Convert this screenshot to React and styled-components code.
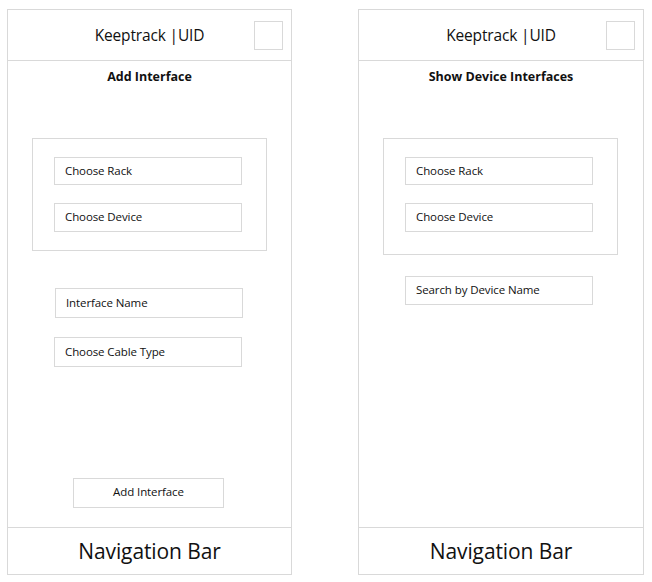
import React from "react";
import styled, { createGlobalStyle } from "styled-components";

const GlobalStyle = createGlobalStyle`
  html, body {
    margin: 0;
    padding: 0;
    background: #fff;
  }
  body {
    font-family: "Open Sans", "Noto Sans", sans-serif;
    color: #111;
  }
`;

const Page = styled.div`
  display: flex;
  gap: 66px;
  padding: 9px 0 0 7px;
`;

const Phone = styled.div`
  width: ${(p) => p.$w}px;
  height: 566px;
  box-sizing: border-box;
  border: 1px solid #d9d9d9;
  display: flex;
  flex-direction: column;
`;

const Header = styled.div`
  height: 51px;
  box-sizing: border-box;
  border-bottom: 1px solid #d9d9d9;
  display: grid;
  grid-template-columns: 1fr auto 1fr;
  align-items: center;
`;

const Brand = styled.div`
  grid-column: 2;
  font-size: 15.5px;
  letter-spacing: -0.15px;
`;

const MenuBox = styled.div`
  grid-column: 3;
  justify-self: end;
  width: 29px;
  height: 29px;
  box-sizing: border-box;
  border: 1px solid #d9d9d9;
  margin-right: 8px;
`;

const Content = styled.div`
  flex: 1;
  display: flex;
  flex-direction: column;
  align-items: flex-start;
`;

const Title = styled.div`
  align-self: center;
  margin-top: 7px;
  font-size: 12.5px;
  line-height: 18px;
  font-weight: 700;
`;

const Group = styled.div`
  margin: 52px 0 0 24px;
  width: 235px;
  box-sizing: border-box;
  border: 1px solid #d9d9d9;
  display: flex;
  flex-direction: column;
  gap: 18px;
  padding: 18px 0 ${(p) => p.$padBottom}px 21px;
`;

const Field = styled.div`
  width: 188px;
  height: ${(p) => p.$h || 28}px;
  box-sizing: border-box;
  border: 1px solid #d9d9d9;
  margin: ${(p) => p.$m || "0"};
  display: flex;
  align-items: center;
  padding: 0 0 2px 10px;
  font-size: 11.5px;
  letter-spacing: -0.1px;
`;

const Button = styled.div`
  width: 151px;
  height: 30px;
  box-sizing: border-box;
  border: 1px solid #d9d9d9;
  margin: auto 0 19px 65px;
  display: flex;
  align-items: center;
  justify-content: center;
  padding-bottom: 3px;
  font-size: 11.5px;
  letter-spacing: -0.1px;
`;

const NavBar = styled.div`
  height: 47px;
  box-sizing: border-box;
  border-top: 1px solid #d9d9d9;
  display: flex;
  align-items: center;
  justify-content: center;
  font-size: 21px;
  letter-spacing: -0.1px;
`;

function Screen({ title, width, children }) {
  return (
    <Phone $w={width}>
      <Header>
        <Brand>Keeptrack |UID</Brand>
        <MenuBox />
      </Header>
      <Content>
        <Title>{title}</Title>
        {children}
      </Content>
      <NavBar>Navigation Bar</NavBar>
    </Phone>
  );
}

export default function App() {
  return (
    <>
      <GlobalStyle />
      <Page>
        <Screen title="Add Interface" width={285}>
          <Group $padBottom={18}>
            <Field>Choose Rack</Field>
            <Field $h={29}>Choose Device</Field>
          </Group>
          <Field $h={30} $m="37px 0 0 47px">Interface Name</Field>
          <Field $h={30} $m="19px 0 0 46px">Choose Cable Type</Field>
          <Button>Add Interface</Button>
        </Screen>
        <Screen title="Show Device Interfaces" width={286}>
          <Group $padBottom={22}>
            <Field>Choose Rack</Field>
            <Field $h={29}>Choose Device</Field>
          </Group>
          <Field $h={29} $m="21px 0 0 46px">Search by Device Name</Field>
        </Screen>
      </Page>
    </>
  );
}
